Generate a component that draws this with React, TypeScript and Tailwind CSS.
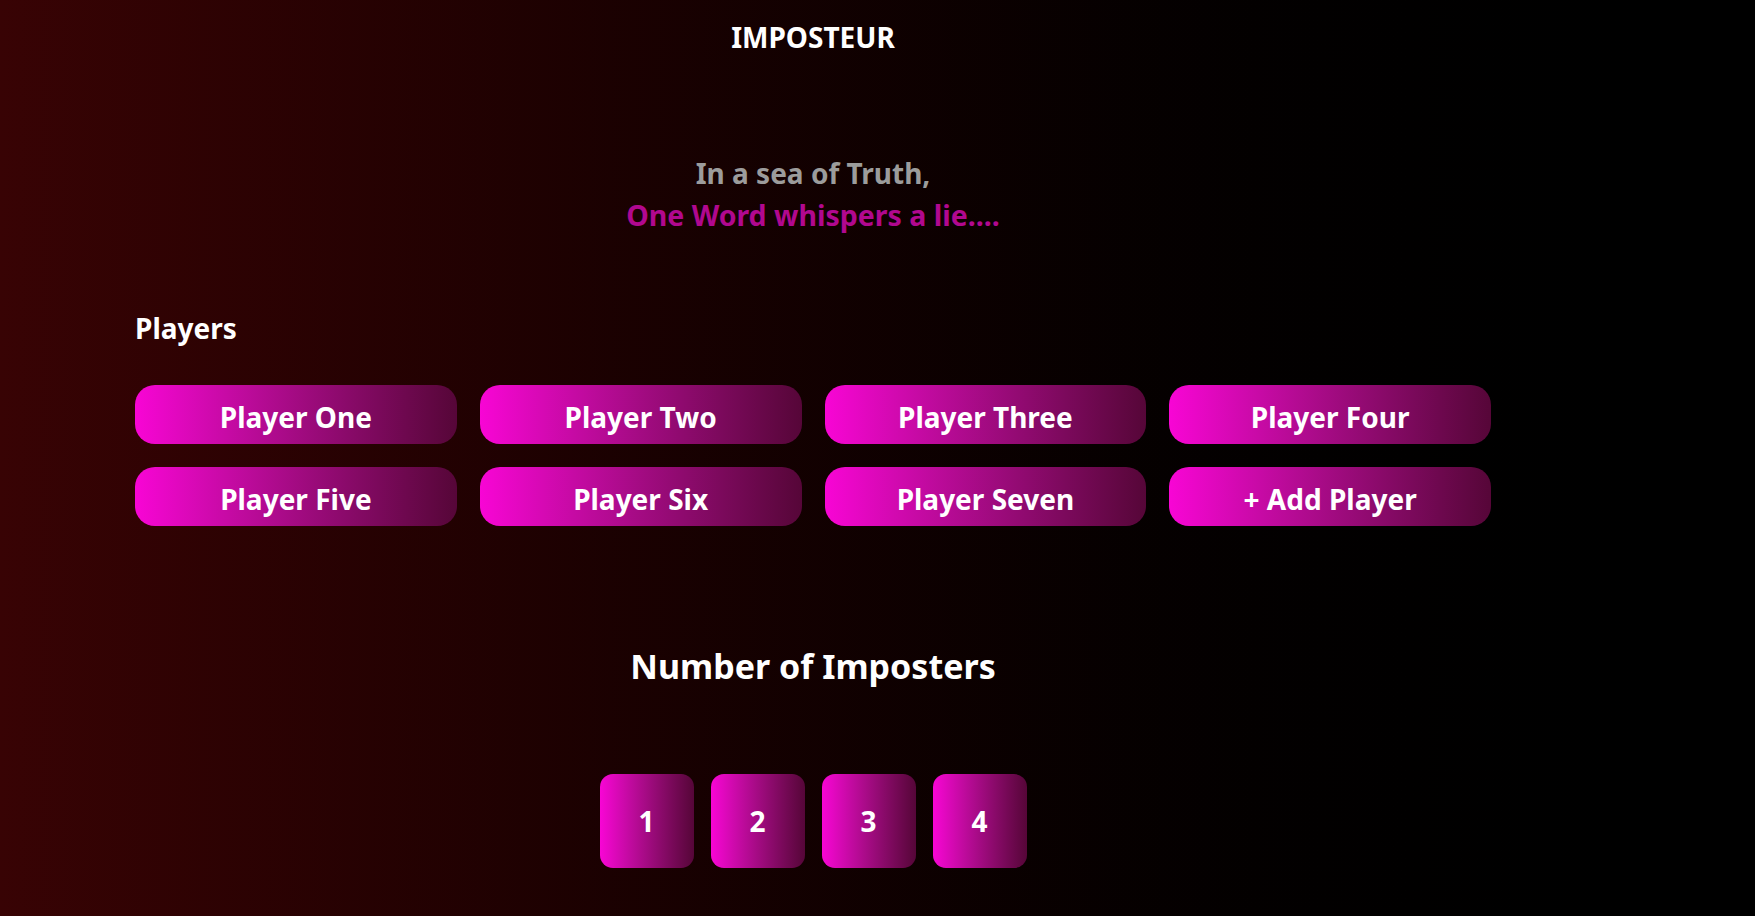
const players = ["Player One", "Player Two", "Player Three", "Player Four", "Player Five", "Player Six", "Player Seven", "+ Add Player"]

const counts = [1, 2, 3, 4]

export default function App() {
  return (
    <div className="min-h-[916px] w-full bg-linear-to-r from-[#380304] to-[#000000] font-['Noto_Sans',sans-serif] font-bold text-white">
      <div className="w-[1626px] px-[135px] pt-[19px] pb-[48px] flex flex-col items-center">
        <h1 className="text-[28px] leading-[36px]">IMPOSTEUR</h1>

        <div className="mt-[97px] flex flex-col items-center text-[28px] leading-[42px]">
          <p className="text-[#9c9c9c]">In a sea of Truth,</p>
          <p className="text-[#b1088f] text-[28.5px]">One Word whispers a lie....</p>
        </div>

        <h2 className="self-start mt-[74px] text-[28px] leading-[36px]">Players</h2>

        <div className="mt-[39px] grid w-full grid-cols-4 gap-[23px]">
          {players.map((name) => (
            <button
              key={name}
              className="h-[59px] rounded-[20px] bg-linear-to-r from-[#f805d5] to-[#560638] pt-[4px] flex items-center justify-center text-[28px] leading-[36px] text-white"
            >
              {name}
            </button>
          ))}
        </div>

        <h2 className="mt-[120px] text-[34px] leading-[40px]">Number of Imposters</h2>

        <div className="mt-[88px] flex gap-[17px]">
          {counts.map((n) => (
            <button
              key={n}
              className="w-[94px] h-[94px] rounded-[13px] bg-linear-to-r from-[#f805d5] to-[#560638] flex items-center justify-center text-[28px] leading-[36px] text-white"
            >
              {n}
            </button>
          ))}
        </div>
      </div>
    </div>
  )
}
